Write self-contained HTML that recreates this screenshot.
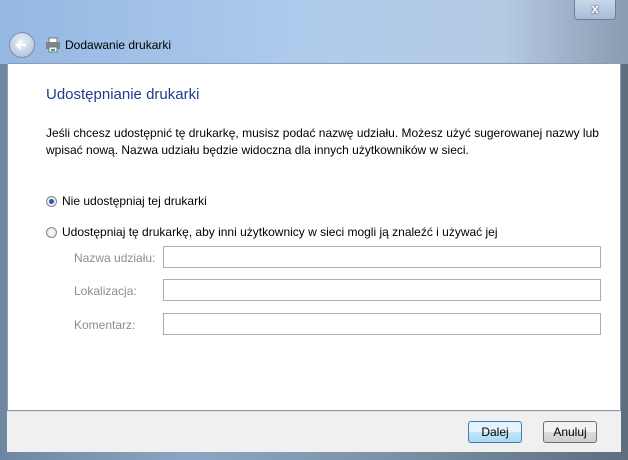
<!DOCTYPE html>
<html><head><style>
body{margin:0;width:628px;height:460px;overflow:hidden;font-family:"Liberation Sans",sans-serif;font-size:12px;background:linear-gradient(90deg,#6f86a0 0%,#8aa6c4 30%,#7e93a8 60%,#5e6e7e 100%);position:relative}
.top{position:absolute;left:0;top:0;width:628px;height:64px;background:linear-gradient(90deg,#95b8e2,#afcbec 50%,#b5cbe4 80%,#8a9bb0)}
.close{position:absolute;left:574px;top:0px;width:42px;height:20px;border:1px solid #6d7f98;border-top:none;border-radius:0 0 4px 4px;background:linear-gradient(#c9d8ea,#a5bcd8);color:#fff;font-weight:bold;text-align:center;font-size:13px;line-height:18px;text-shadow:0 0 2px #234;box-sizing:border-box}
.back{position:absolute;left:9px;top:32px;width:24px;height:24px;border-radius:50%;background:radial-gradient(circle at 50% 35%,#e8f0fa,#a8bcd6);border:1px solid #7d8fa8}
.title{position:absolute;left:65px;top:38px;font-size:12px;color:#000}
.content{position:absolute;left:7px;top:63px;width:614px;height:348px;background:#fff;border:1px solid #8b9db5;box-sizing:border-box}
.footer{position:absolute;left:7px;top:411px;width:614px;height:41px;background:#f0f0f0;border-top:1px solid #dfdfdf;box-sizing:border-box}
.h{position:absolute;left:46px;top:86px;font-size:15px;color:#1e3e8c}
.p{position:absolute;left:46px;top:125px;line-height:17px;color:#000}
.r{position:absolute;width:11px;height:11px;border-radius:50%;border:1px solid #8a8a8a;background:radial-gradient(#fff,#ddd);box-sizing:border-box}
.r.on::after{content:"";position:absolute;left:2px;top:2px;width:5px;height:5px;border-radius:50%;background:#1d5fb9}
.lbl{position:absolute;color:#000}
.g{position:absolute;color:#8d8d8d;left:74px}
.in{position:absolute;left:163px;width:438px;height:22px;border:1px solid #abadb3;box-sizing:border-box;background:#fff}
.btn{position:absolute;top:421px;width:54px;height:22px;border:1px solid #707070;border-radius:3px;background:linear-gradient(#f2f2f2 50%,#dcdcdc 50%,#cfcfcf);box-sizing:border-box;text-align:center;line-height:20px}
</style></head><body>
<div class="top"></div>
<div class="close">x</div>
<div class="back"><svg width="24" height="24"><path d="M16 12H8M11 8l-4 4 4 4" stroke="#fff" stroke-width="2.5" fill="none"/></svg></div>
<svg style="position:absolute;left:45px;top:37px" width="16" height="16"><rect x="4" y="1" width="8" height="5" fill="#fff" stroke="#777"/><rect x="1" y="5" width="14" height="7" fill="#7b8590"/><rect x="4" y="10" width="8" height="5" fill="#fff" stroke="#777"/><rect x="6" y="12" width="4" height="2" fill="#3a8"/></svg>
<div class="title">Dodawanie drukarki</div>
<div class="content"></div>
<div class="footer"></div>
<div class="h">Udostępnianie drukarki</div>
<div class="p">Jeśli chcesz udostępnić tę drukarkę, musisz podać nazwę udziału. Możesz użyć sugerowanej nazwy lub<br>wpisać nową. Nazwa udziału będzie widoczna dla innych użytkowników w sieci.</div>
<div class="r on" style="left:46px;top:196px"></div><div class="lbl" style="left:62px;top:194px">Nie udostępniaj tej drukarki</div>
<div class="r" style="left:46px;top:227px"></div><div class="lbl" style="left:62px;top:225px">Udostępniaj tę drukarkę, aby inni użytkownicy w sieci mogli ją znaleźć i używać jej</div>
<div class="g" style="top:251px">Nazwa udziału:</div><div class="in" style="top:246px"></div>
<div class="g" style="top:284px">Lokalizacja:</div><div class="in" style="top:279px"></div>
<div class="g" style="top:318px">Komentarz:</div><div class="in" style="top:313px"></div>
<div class="btn" style="left:468px;border-color:#3c7fb1;background:linear-gradient(#e5f4fc 50%,#c4e5f6 50%,#a9d9f2)">Dalej</div>
<div class="btn" style="left:543px">Anuluj</div>
</body></html>
